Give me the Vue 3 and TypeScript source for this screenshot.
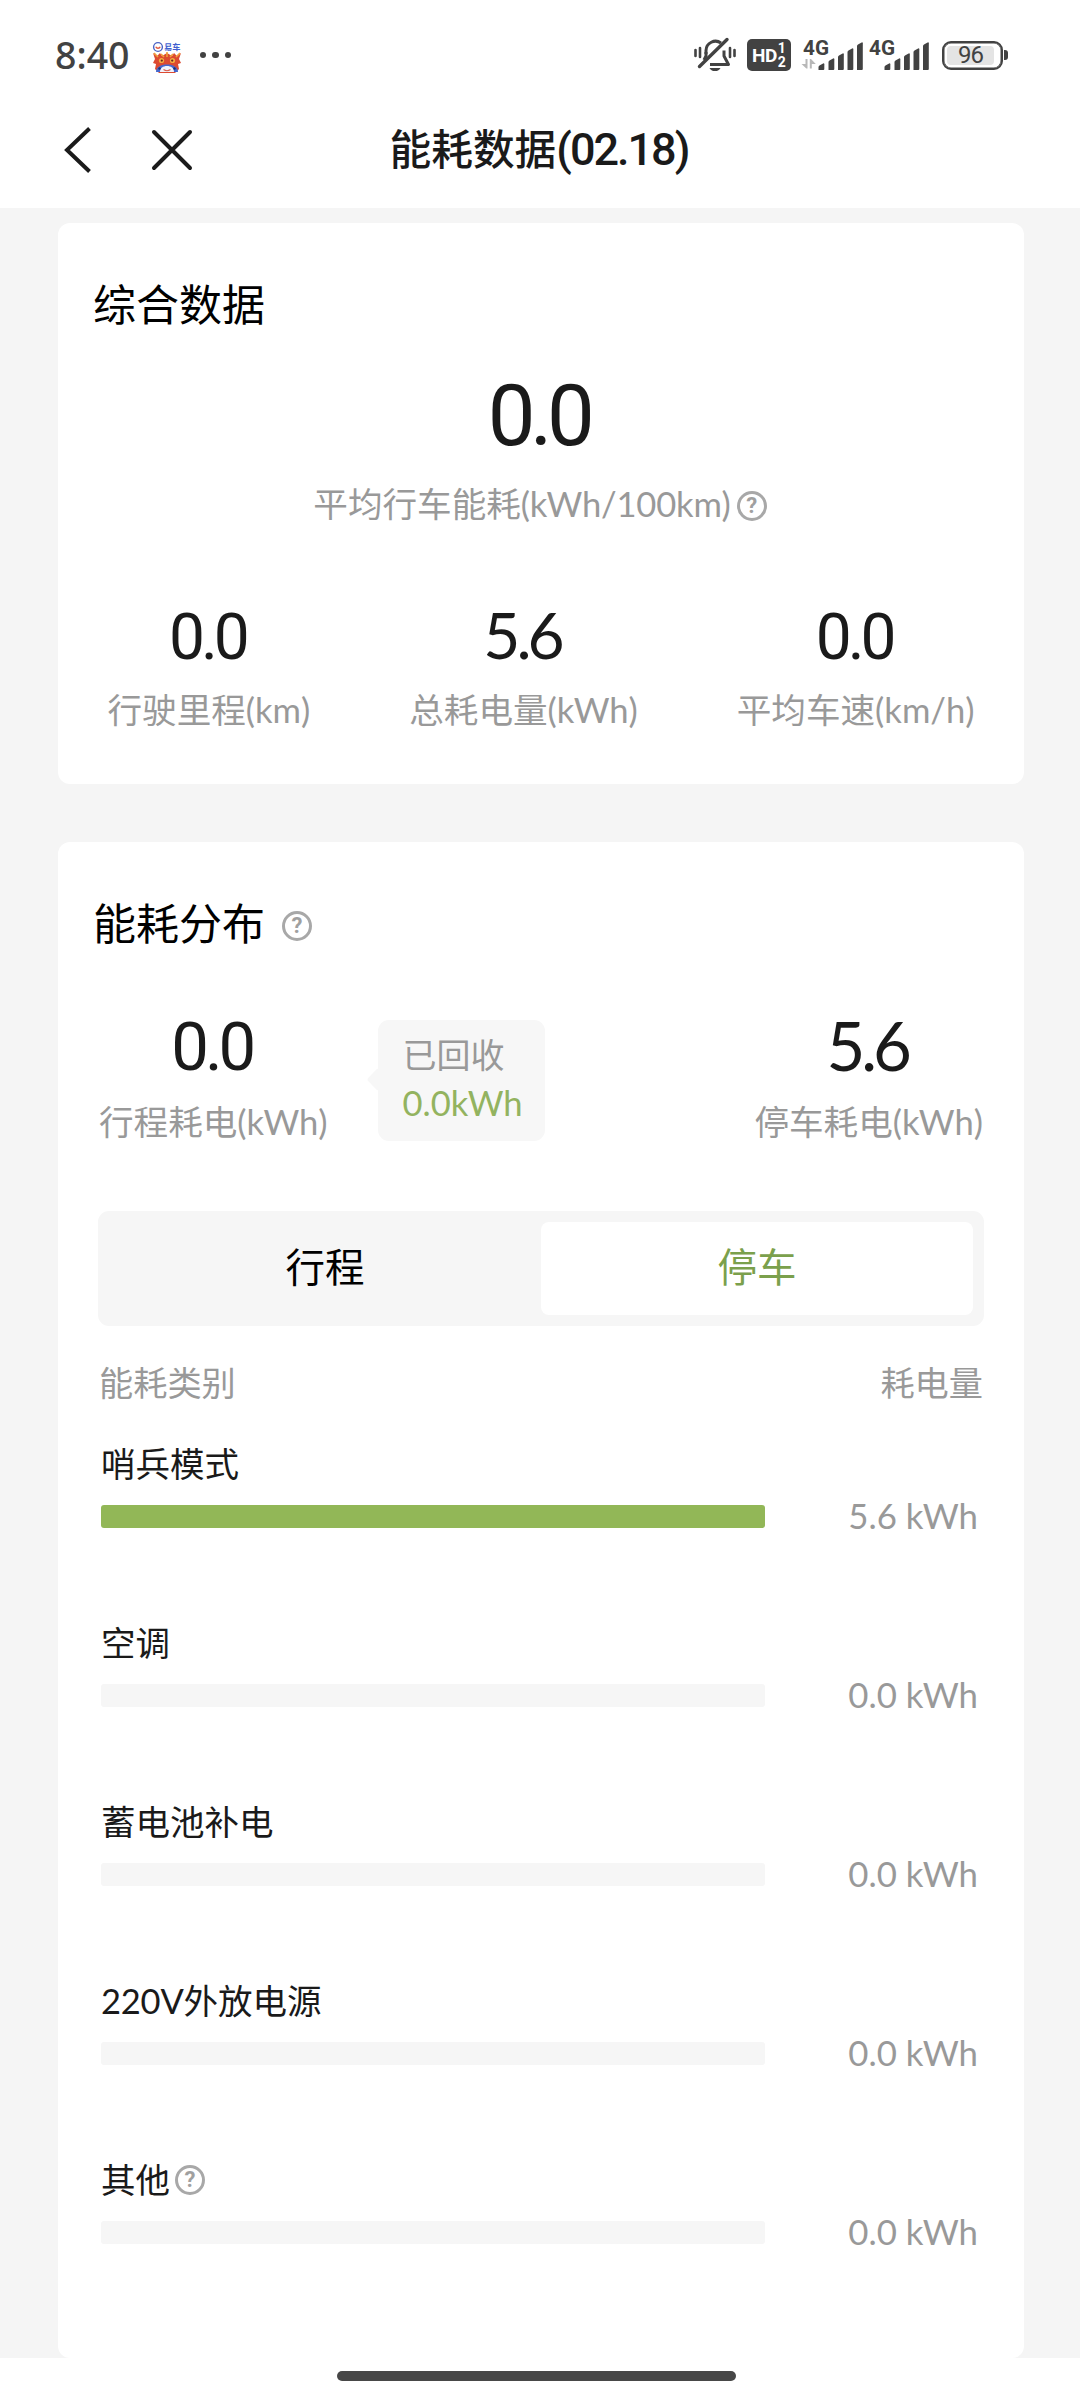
<script setup lang="ts">
interface Metric {
  value: string
  label: string
  unit: string
}

interface Usage {
  prefix?: string
  name: string
  amount: string
  ratio: number
  help?: boolean
}

const stats: Metric[] = [
  { value: '0.0', label: '行驶里程', unit: '(km)' },
  { value: '5.6', label: '总耗电量', unit: '(kWh)' },
  { value: '0.0', label: '平均车速', unit: '(km/h)' },
]

const usages: Usage[] = [
  { name: '哨兵模式', amount: '5.6', ratio: 100 },
  { name: '空调', amount: '0.0', ratio: 0 },
  { name: '蓄电池补电', amount: '0.0', ratio: 0 },
  { prefix: '220V', name: '外放电源', amount: '0.0', ratio: 0 },
  { name: '其他', amount: '0.0', ratio: 0, help: true },
]

const signalBars = [
  { x: 0, top: 21 },
  { x: 10, top: 16 },
  { x: 19.5, top: 11 },
  { x: 29, top: 6 },
  { x: 38.5, top: 0 },
]
</script>

<template>
  <div class="screen">
    <header class="status">
      <span class="clock">8:40</span>
      <svg class="app-icon" width="32" height="34" viewBox="0 0 32 34">
        <circle cx="7" cy="7" r="4.4" fill="none" stroke="#4a63c4" stroke-width="1.4" />
        <path d="M4.8 6.8a2.4 2.4 0 0 0 4.4 0" fill="none" stroke="#e0563f" stroke-width="1.4" />
        <text x="13" y="10.4" font-size="8.2" font-weight="700" fill="#3f5fd0">易车</text>
        <path d="M2 13l4 3 3-3 2 3 5-3 5 3 2-3 3 3 4-3-2 6 2 4-3 1 1 5-4 4H8l-4-4 1-5-3-1 2-4z" fill="#dc4a31" />
        <path d="M3 13l4 4M29 13l-4 4M16 12v5M10 14l3 3M22 14l-3 3" stroke="#f0a03c" stroke-width="1.6" />
        <circle cx="10.5" cy="20.5" r="2.6" fill="#f3ac3f" />
        <circle cx="21.5" cy="20.5" r="2.6" fill="#f3ac3f" />
        <circle cx="10.8" cy="20.6" r="1.1" fill="#6d2320" />
        <circle cx="21.2" cy="20.6" r="1.1" fill="#6d2320" />
        <path d="M5 32c0-5 5-7.500 11-7.500S27 27 27 32z" fill="#4468cf" />
        <path d="M9 32c0-4 3-6 7-6s7 2 7 6z" fill="#f2f3fb" />
        <path d="M12.500 29.500q3.500 2.500 7 0" fill="none" stroke="#d8604f" stroke-width="1.200" />
        <circle cx="8.500" cy="28.500" r="1.200" fill="#1d2f73" />
        <circle cx="23.500" cy="28.500" r="1.200" fill="#1d2f73" />
      </svg>
      <span class="more"><i></i><i></i><i></i></span>

      <svg class="bell" width="42" height="36" viewBox="0 0 42 36">
        <g fill="none" stroke="#424242" stroke-width="3">
          <path d="M12 17v-3.500a9.500 9.500 0 0 1 15-7.500M30 13.500V19l4.500 8.500H16" stroke-linejoin="round" />
          <path d="M12 15v4l-2 4" />
          <path d="M5.500 29.500L33 2.500" stroke-width="3.400" stroke-linecap="round" />
          <path d="M1.500 13v6M6 11v9M36 11v9M40.500 13v6" stroke-width="2.600" stroke-linecap="round" />
        </g>
        <path d="M15.500 31h11a5.800 4.500 0 0 1-11 0z" fill="#424242" />
      </svg>
      <span class="hd">
        <b>HD</b>
        <span class="hd-lines"><em>1</em><em>2</em></span>
      </span>
      <span v-for="sim in 2" :key="sim" class="sim" :class="{ second: sim === 2 }">
        <svg width="64" height="32" viewBox="0 0 64 32">
          <text x="0" y="15.500" class="net" textLength="26" lengthAdjust="spacingAndGlyphs">4G</text>
          <path
            v-if="sim === 1"
            d="M2.500 20h2v9.500h-1.200L-1.500 25h4zM6.800 29.500h2V25h4L8 20H6.800z"
            fill="#b8b8b8"
          />
          <g fill="#424242" transform="translate(15.500 3)">
            <path
              v-for="bar in signalBars"
              :key="bar.x"
              :d="`M${bar.x} 28v${-(24 - bar.top)}q0-1 1-1.600l3.600-2q1.200-.5 1.200 .8V27q0 1-1 1z`"
            />
          </g>
        </svg>
      </span>
      <span class="battery"><span>96</span></span>
      <span class="battery-tip"></span>
    </header>

    <nav class="nav">
      <svg class="back" width="30" height="46" viewBox="0 0 30 46">
        <path d="M27.500 1.500L5 23 27.500 44.500" fill="none" stroke="#1b1b1b" stroke-width="4" />
      </svg>
      <svg class="close" width="42" height="42" viewBox="0 0 42 42">
        <path d="M3 3l36 36M39 3L3 39" fill="none" stroke="#1b1b1b" stroke-width="4" stroke-linecap="round" />
      </svg>
      <h1>能耗数据<span>(02.18)</span></h1>
    </nav>

    <main class="content">
      <section class="card overall">
        <h2>综合数据</h2>
        <div class="main-value">0.0</div>
        <div class="main-label">
          <span>平均行车能耗<span class="lat">(kWh/100km)</span></span>
          <i class="help">?</i>
        </div>
        <div class="stats">
          <div v-for="item in stats" :key="item.label" class="stat">
            <div class="value" :class="{ open: item.value === '5.6' }">{{ item.value }}</div>
            <div class="label">{{ item.label }}<span class="lat">{{ item.unit }}</span></div>
          </div>
        </div>
      </section>

      <section class="card spread">
        <h2>能耗分布<i class="help">?</i></h2>
        <div class="summary">
          <div class="stat large">
            <div class="value">0.0</div>
            <div class="label">行程耗电<span class="lat">(kWh)</span></div>
          </div>
          <div class="bubble">
            <div>已回收</div>
            <div class="recovered">0.0kWh</div>
          </div>
          <div class="stat large parking">
            <div class="value open">5.6</div>
            <div class="label">停车耗电<span class="lat">(kWh)</span></div>
          </div>
        </div>
        <div class="tabs">
          <div class="tab">行程</div>
          <div class="tab active">停车</div>
        </div>
        <div class="columns">
          <span>能耗类别</span>
          <span>耗电量</span>
        </div>
        <div v-for="row in usages" :key="row.name" class="usage">
          <div class="usage-name">
            <span v-if="row.prefix" class="prefix">{{ row.prefix }}</span>{{ row.name }}<i v-if="row.help" class="help">?</i>
          </div>
          <div class="usage-line">
            <div class="track"><div class="fill" :style="{ width: row.ratio + '%' }"></div></div>
            <div class="amount">{{ row.amount }} kWh</div>
          </div>
        </div>
      </section>
    </main>

    <footer class="home"><span></span></footer>
  </div>
</template>

<style>
body {
  margin: 0;
  background: #fff;
}
</style>

<style scoped>
.screen {
  width: 1080px;
  height: 2400px;
  display: flex;
  flex-direction: column;
  overflow: hidden;
  background: #fff;
  color: #1a1a1a;
  font-family: Lato, "Noto Sans CJK SC", sans-serif;
}
.screen * {
  box-sizing: border-box;
}
i,
em {
  font-style: normal;
}

.status {
  height: 110px;
  display: flex;
  align-items: center;
  padding-left: 55px;
  color: #424242;
}
.clock {
  width: 96px;
  font: 500 37.500px/40px "Noto Sans", sans-serif;
}
.app-icon {
  margin-top: 3px;
  font-family: "Noto Sans CJK SC", sans-serif;
}
.more {
  display: flex;
  gap: 6px;
  margin-left: 17px;
  width: 494px;
}
.more i {
  width: 6.300px;
  height: 6.300px;
  border-radius: 50%;
  background: #424242;
}
.bell {
  flex: none;
}
.hd {
  display: flex;
  align-items: center;
  justify-content: center;
  gap: 1px;
  width: 44px;
  height: 32px;
  margin: 0 11px;
  border-radius: 5px;
  background: #424242;
  color: #fff;
  font-family: Roboto, sans-serif;
}
.hd b {
  font-size: 19px;
  letter-spacing: -0.500px;
}
.hd-lines {
  display: flex;
  flex-direction: column;
}
.hd-lines em {
  font: 700 14px/14px Roboto, sans-serif;
}
.sim {
  width: 62px;
  height: 32px;
  margin-left: 1px;
}
.sim.second {
  margin-left: 4px;
}
.sim svg {
  display: block;
  overflow: visible;
}
.net {
  font: 700 20px Roboto, sans-serif;
  fill: #424242;
}
.battery {
  width: 61px;
  height: 29px;
  margin-left: 11px;
  padding: 3px;
  border: 2px solid #424242;
  border-radius: 9px;
  box-shadow: inset 0 0 0 0.500px #424242;
}
.battery span {
  display: block;
  height: 19px;
  width: 47px;
  border-radius: 4px;
  background: #e4e4e4;
  font: 400 24px/19px Roboto, sans-serif;
  letter-spacing: -1px;
  text-align: center;
}
.battery-tip {
  width: 4px;
  height: 10px;
  margin-left: 1px;
  border-radius: 0 3px 3px 0;
  background: #424242;
}

.nav {
  position: relative;
  height: 98px;
  display: flex;
  align-items: center;
  padding: 0 0 18px 62px;
}
.close {
  margin-left: 59px;
}
h1 {
  position: absolute;
  top: 7px;
  left: 0;
  width: 100%;
  margin: 0;
  padding-right: 2px;
  font: 500 41.700px/60px "Noto Sans CJK SC", sans-serif;
  text-align: center;
}
h1 span {
  font-family: Roboto, sans-serif;
  font-size: 45px;
  letter-spacing: -2px;
}

.content {
  height: 2150px;
  flex: none;
  padding: 15px 56px 0 58px;
  background: #f5f5f5;
}
.card {
  background: #fff;
  border-radius: 12px;
  padding-top: 52px;
}
.overall {
  height: 561px;
}
.spread {
  height: 1516px;
  margin-top: 58px;
}
h2 {
  display: flex;
  align-items: center;
  margin: 0 0 0 35px;
  height: 60px;
  color: #000;
  font-weight: 400;
  font-size: 43px;
  line-height: 62px;
}
h2 .help {
  margin: 4px 0 0 17px;
}
.help {
  display: inline-block;
  flex: none;
  width: 30px;
  height: 30px;
  border: 3px solid #a8a8a8;
  border-radius: 50%;
  color: #a0a0a0;
  font: 700 22px/24px Roboto, sans-serif;
  text-align: center;
}
.main-value,
.value {
  font-family: Roboto, sans-serif;
  text-align: center;
}
.main-value {
  height: 90px;
  margin-top: 36px;
  padding-right: 5px;
  font-size: 85px;
  line-height: 90px;
  letter-spacing: -5.500px;
}
.main-label {
  display: flex;
  align-items: center;
  justify-content: center;
  gap: 6px;
  height: 50px;
  margin-top: 18px;
  padding-right: 2px;
  color: #999;
  font-size: 34.600px;
  line-height: 50px;
}
.main-label .help {
  margin-top: 4px;
}
.lat {
  letter-spacing: -0.200px;
}
.label .lat {
  letter-spacing: 0;
}
.stats {
  display: flex;
  justify-content: space-around;
  margin-top: 78px;
}
.value {
  height: 60px;
  padding-right: 3px;
  font-size: 64px;
  line-height: 61px;
  letter-spacing: -4px;
}
.value.open {
  font-family: Lato, sans-serif;
  line-height: 56px;
}
.label {
  height: 50px;
  margin-top: 18px;
  color: #999;
  font-size: 34.600px;
  line-height: 50px;
  white-space: nowrap;
}
.large .value {
  height: 70px;
  font-size: 67px;
  line-height: 71px;
}
.large .value.open {
  line-height: 67px;
}
.large .label {
  margin-top: 15px;
}

.summary {
  display: flex;
  height: 136px;
  margin: 58px 41px 0;
}
.bubble {
  position: relative;
  width: 167px;
  height: 121px;
  margin: 8px 0 0 50px;
  padding: 11px 0 0 25px;
  border-radius: 11px;
  background: #f7f7f7;
  color: #999;
  font-size: 34px;
  line-height: 48px;
}
.bubble::before {
  content: "";
  position: absolute;
  left: -8px;
  top: 51px;
  width: 17px;
  height: 17px;
  border-radius: 3px;
  background: #f7f7f7;
  transform: rotate(45deg);
}
.recovered {
  color: #93b35f;
  font-size: 34.600px;
}
.parking {
  margin-left: auto;
}
.tabs {
  display: flex;
  height: 115px;
  margin: 63px 40px 0;
  padding: 11px;
  border-radius: 11px;
  background: #f6f6f6;
}
.tab {
  flex: 1;
  border-radius: 8px;
  color: #000;
  font-size: 39.500px;
  line-height: 89px;
  text-align: center;
}
.tab.active {
  background: #fff;
  color: #7ba04c;
}
.columns {
  display: flex;
  justify-content: space-between;
  height: 50px;
  margin: 32px 41px 31px;
  color: #999;
  font-size: 34.200px;
  line-height: 50px;
}
.usage {
  height: 179px;
  padding: 0 46px 0 43px;
}
.usage-name {
  display: flex;
  align-items: center;
  height: 50px;
  font-size: 34.500px;
  line-height: 50px;
}
.usage-name .help {
  margin: 0 0 0 5px;
}
.prefix {
  letter-spacing: -0.200px;
}
.usage-line {
  display: flex;
  align-items: center;
  justify-content: space-between;
  height: 23px;
  margin-top: 16px;
}
.track {
  width: 664px;
  height: 23px;
  overflow: hidden;
  border-radius: 3px;
  background: #f6f6f6;
}
.fill {
  height: 100%;
  background: #92b757;
}
.amount {
  padding-bottom: 2px;
  color: #999;
  font-size: 34.800px;
  line-height: 40px;
}

.home {
  flex: 1;
  display: flex;
  justify-content: center;
  padding: 13px 7px 0 0;
}
.home span {
  width: 399px;
  height: 10px;
  border-radius: 5px;
  background: #474747;
}
</style>
